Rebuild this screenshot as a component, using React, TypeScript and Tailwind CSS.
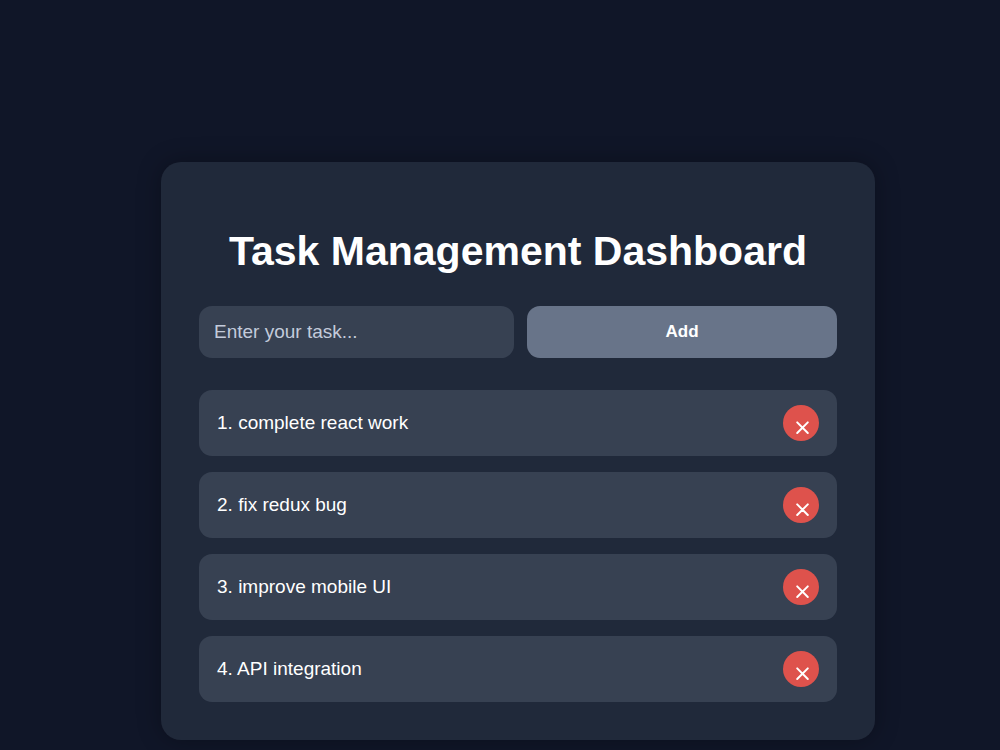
import { useState } from 'react';
import type { FormEvent } from 'react';

interface Task {
  id: number;
  title: string;
}

const initialTasks: Task[] = [
  { id: 1, title: 'complete react work' },
  { id: 2, title: 'fix redux bug' },
  { id: 3, title: 'improve mobile UI' },
  { id: 4, title: 'API integration' },
];

function CloseIcon() {
  return (
    <svg
      className="w-4 h-4"
      viewBox="0 0 16 16"
      fill="none"
      stroke="currentColor"
      strokeWidth="2"
      strokeLinecap="round"
      aria-hidden="true"
    >
      <path d="M3.2 3.4 13.8 14M13.8 3.4 3.2 14" />
    </svg>
  );
}

interface TaskItemProps {
  task: Task;
  index: number;
  onDelete: (id: number) => void;
}

function TaskItem({ task, index, onDelete }: TaskItemProps) {
  return (
    <li className="flex items-center justify-between rounded-[13px] bg-[#374152] px-[18px] py-[15px]">
      <span className="text-[19px] leading-6">
        {index + 1}. {task.title}
      </span>
      <button
        type="button"
        aria-label={`Delete ${task.title}`}
        onClick={() => onDelete(task.id)}
        className="flex h-9 w-9 shrink-0 items-center justify-center rounded-full bg-[#de524c] pt-2 pl-0.5"
      >
        <CloseIcon />
      </button>
    </li>
  );
}

export default function App() {
  const [tasks, setTasks] = useState<Task[]>(initialTasks);
  const [title, setTitle] = useState('');

  const addTask = (e: FormEvent) => {
    e.preventDefault();
    if (!title.trim()) return;
    setTasks([...tasks, { id: Date.now(), title: title.trim() }]);
    setTitle('');
  };

  const deleteTask = (id: number) => {
    setTasks(tasks.filter((task) => task.id !== id));
  };

  return (
    <div className="min-h-screen bg-[#101628] pt-[162px] pb-[10px] pl-9 font-['Liberation_Sans',Arial,sans-serif] text-white">
      <main className="mx-auto w-full max-w-[714px] rounded-[20px] bg-[#20293a] p-[38px] shadow-[0_0_25px_rgba(0,0,0,0.3)]">
        <h1 className="mt-[26px] mb-[30px] text-center text-[41px] leading-[50px] font-bold">
          Task Management Dashboard
        </h1>

        <form onSubmit={addTask} className="flex gap-[13px]">
          <input
            type="text"
            aria-label="Task"
            placeholder="Enter your task..."
            value={title}
            onChange={(e) => setTitle(e.target.value)}
            className="h-[52px] min-w-0 flex-1 rounded-[13px] bg-[#374152] px-[15px] text-[19px] outline-none placeholder:text-[#c3cbdb]"
          />
          <button
            type="submit"
            className="h-[52px] w-[310px] rounded-[13px] bg-[#687489] text-[17px] font-bold"
          >
            Add
          </button>
        </form>

        <ul className="mt-8 flex flex-col gap-4">
          {tasks.map((task, index) => (
            <TaskItem key={task.id} task={task} index={index} onDelete={deleteTask} />
          ))}
        </ul>
      </main>
    </div>
  );
}
